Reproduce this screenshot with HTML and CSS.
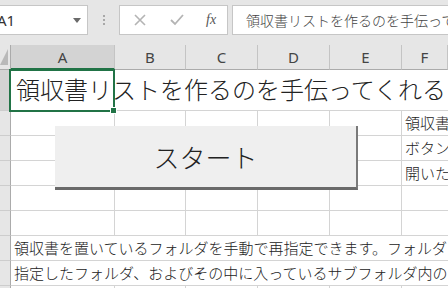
FILE: index.html
```html
<!DOCTYPE html>
<html lang="ja">
<head>
  <meta charset="UTF-8" />
  <title>領収書リスト</title>
  <link rel="stylesheet" href="styles.css">
</head>
<body>
  <div class="toolbar">
    <div class="namebox">
      <span class="ref">A1</span>
      <svg class="drop" width="8" height="5" viewBox="0 0 8 5"><path d="M0 0h8L4 5z" fill="#6a6a6a"/></svg>
    </div>
    <div class="grip"><i></i><i></i><i></i></div>
    <div class="fxbox">
      <svg width="12" height="12" viewBox="0 0 12 12"><path d="M1 1l10 10M11 1L1 11" stroke="#b4b4b4" stroke-width="1.6" fill="none"/></svg>
      <svg width="14" height="12" viewBox="0 0 14 12"><path d="M1 6l4 4 8-9" stroke="#b4b4b4" stroke-width="1.8" fill="none"/></svg>
      <span class="fx">fx</span>
    </div>
    <div class="formula">領収書リストを作るのを手伝ってくれる</div>
  </div>

  <div class="sheet">
    <div class="row head">
      <div class="rh corner"><svg width="9" height="17" viewBox="0 0 9 17"><path d="M8 0v16H0z" fill="#b9b9b9"/></svg></div>
      <div class="c a sel">A</div>
      <div class="c b">B</div>
      <div class="c">C</div>
      <div class="c">D</div>
      <div class="c">E</div>
      <div class="c f">F</div>
    </div>

    <div class="row tall">
      <div class="rh selrow"></div>
      <div class="c wide title">領収書リストを作るのを手伝ってくれる</div>
    </div>

    <div class="row">
      <div class="rh"></div>
      <div class="c a"></div><div class="c b"></div><div class="c"></div><div class="c"></div><div class="c"></div>
      <div class="c f note">領収書を置いているフォルダを選択</div>
    </div>
    <div class="row">
      <div class="rh"></div>
      <div class="c a"></div><div class="c b"></div><div class="c"></div><div class="c"></div><div class="c"></div>
      <div class="c f note">ボタンを押すと</div>
    </div>
    <div class="row">
      <div class="rh"></div>
      <div class="c a"></div><div class="c b"></div><div class="c"></div><div class="c"></div><div class="c"></div>
      <div class="c f note">開いたダイアログで</div>
    </div>
    <div class="row">
      <div class="rh"></div>
      <div class="c a"></div><div class="c b"></div><div class="c"></div><div class="c"></div><div class="c"></div>
      <div class="c f"></div>
    </div>
    <div class="row">
      <div class="rh"></div>
      <div class="c a"></div><div class="c b"></div><div class="c"></div><div class="c"></div><div class="c"></div>
      <div class="c f"></div>
    </div>
    <div class="row">
      <div class="rh"></div>
      <div class="c wide text">領収書を置いているフォルダを手動で再指定できます。フォルダを選択してください。</div>
    </div>
    <div class="row">
      <div class="rh"></div>
      <div class="c wide text">指定したフォルダ、およびその中に入っているサブフォルダ内のファイルを読み込みます。</div>
    </div>
    <div class="row">
      <div class="rh"></div>
      <div class="c a"></div><div class="c b"></div><div class="c"></div><div class="c"></div><div class="c"></div>
      <div class="c f"></div>
    </div>

    <!-- 選択セル -->
    <div class="cursor"><span class="handle"></span></div>

    <button class="start">スタート</button>
  </div>
</body>
</html>
```

FILE: styles.css
```css
body {
  margin: 0;
  width: 448px;
  height: 288px;
  overflow: hidden;
  background: #ffffff;
  font-family: "Noto Sans CJK JP", "Noto Sans", sans-serif;
  color: #222;
}

.toolbar {
  display: flex;
  align-items: flex-start;
  height: 45px;
  padding-top: 5px;
  box-sizing: border-box;
  background: #e6e6e6;
}

.namebox {
  display: flex;
  align-items: center;
  justify-content: space-between;
  width: 98px;
  height: 30px;
  margin-left: -10px;
  padding: 0 6px 0 6px;
  box-sizing: border-box;
  background: #fff;
  border: 1px solid #c6c6c6;
  font-family: "Noto Sans", sans-serif;
  font-size: 15px;
  color: #333;
}

.grip {
  display: flex;
  flex-direction: column;
  gap: 2px;
  width: 31px;
  padding-top: 10px;
  align-items: center;
}

.grip i {
  width: 2px;
  height: 2px;
  background: #a8a8a8;
}

.fxbox {
  display: flex;
  align-items: center;
  width: 109px;
  height: 30px;
  padding-left: 14px;
  gap: 24px;
  box-sizing: border-box;
  background: #fff;
  border: 1px solid #c6c6c6;
}

.fx {
  margin-left: -2px;
  font-family: "Liberation Serif", serif;
  font-style: italic;
  font-size: 14px;
  color: #555;
}

.formula {
  flex: 1;
  height: 30px;
  margin-left: 4px;
  padding-left: 13px;
  box-sizing: border-box;
  background: #fff;
  border: 1px solid #c6c6c6;
  border-right: none;
  font-size: 14px;
  font-weight: 300;
  line-height: 28px;
  white-space: nowrap;
  overflow: hidden;
  color: #444;
}

.sheet {
  position: relative;
}

.row {
  display: flex;
  height: 25px;
}

.row.tall {
  height: 41px;
}

.rh {
  flex: none;
  width: 11px;
  box-sizing: border-box;
  background: #e6e6e6;
  border-right: 1px solid #ababab;
  border-bottom: 1px solid #cdcdcd;
}

.rh.selrow {
  background: #d3d3d3;
}

.rh.corner {
  display: flex;
  align-items: flex-end;
  padding-bottom: 3px;
  border-bottom: 1px solid #ababab;
}

.c {
  flex: none;
  width: 72px;
  box-sizing: border-box;
  border-right: 1px solid #d4d4d4;
  border-bottom: 1px solid #d4d4d4;
  white-space: nowrap;
}

.c.a { width: 104px; }
.c.b { width: 71px; }
.c.f { flex: 1; border-right: none; }

.c.wide {
  flex: 1;
  border-right: none;
  padding-left: 3px;
}

.head .c {
  background: #e6e6e6;
  border-right: 1px solid #c4c4c4;
  border-bottom: 1px solid #ababab;
  font-family: "Noto Sans", sans-serif;
  font-size: 15px;
  line-height: 24px;
  text-align: center;
  color: #444;
}

.head .c.sel {
  background: #d3d3d3;
  border-bottom: 2px solid #217346;
}

.title {
  font-size: 24px;
  font-weight: 300;
  line-height: 38px;
  padding-left: 5px !important;
}

.text {
  font-size: 15px;
  font-weight: 300;
  line-height: 24px;
}

.note {
  padding-left: 3px;
  font-size: 15px;
  font-weight: 300;
  line-height: 24px;
}

.cursor {
  position: absolute;
  left: 9px;
  top: 24px;
  width: 106px;
  height: 43px;
  box-sizing: border-box;
  border: 2px solid #217346;
}

.handle {
  position: absolute;
  right: -4px;
  bottom: -4px;
  width: 5px;
  height: 5px;
  background: #217346;
  border: 1px solid #fff;
}

.start {
  position: absolute;
  left: 55px;
  top: 81px;
  width: 303px;
  height: 64px;
  box-sizing: border-box;
  background: #efefef;
  border: none;
  border-right: 2px solid #7a7a7a;
  border-bottom: 3px solid #6a6a6a;
  font-family: "Noto Sans CJK JP", sans-serif;
  font-size: 26px;
  font-weight: 300;
  color: #222;
  padding: 0;
}
```
